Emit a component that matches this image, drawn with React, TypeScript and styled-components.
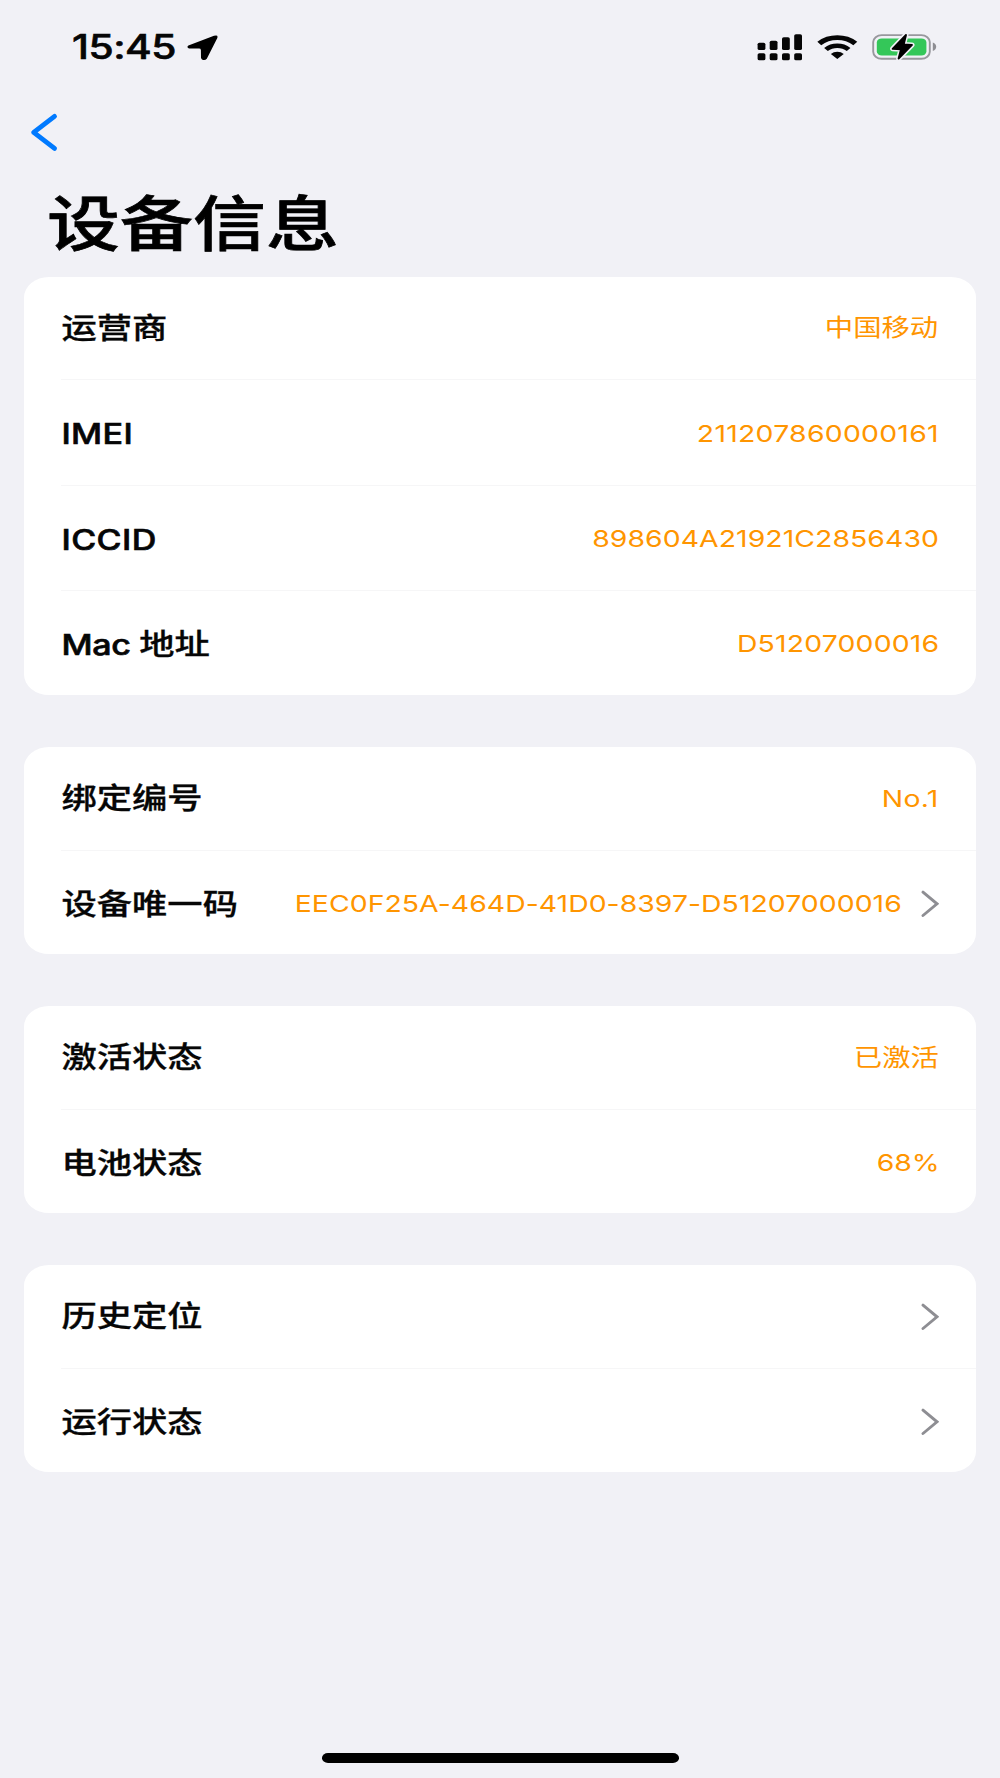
import React from 'react';
import styled, { createGlobalStyle } from 'styled-components';

const STRETCH = 1.217;

const GlobalStyle = createGlobalStyle`
  * {
    box-sizing: border-box;
  }
  body {
    margin: 0;
    background: #f1f1f6;
    font-family: Inter, 'Noto Sans CJK SC', sans-serif;
    color: #060606;
  }
`;

const Screen = styled.main`
  width: 1000px;
  height: 1778px;
  display: flex;
  flex-direction: column;
  overflow: hidden;
  background: #f1f1f6;
`;

const StatusBar = styled.header`
  height: 94px;
  display: flex;
  align-items: center;
  justify-content: space-between;
  padding: 0 63px 0 72px;
`;

const StatusGroup = styled.div<{ $gap: number }>`
  display: flex;
  align-items: center;
  gap: ${(p) => p.$gap}px;
`;

const Clock = styled.time`
  width: 115px;
  font-size: 33.5px;
  font-weight: 500;
  line-height: 40px;
  letter-spacing: -0.4px;
  white-space: nowrap;
  -webkit-text-stroke: 0.6px #060606;
  transform: scaleX(${STRETCH});
  transform-origin: left center;
`;

const NavBar = styled.nav`
  height: 77px;
  display: flex;
  align-items: center;
  padding: 0 0 1px 29px;
`;

const BackButton = styled.button`
  display: flex;
  padding: 0;
  border: 0;
  background: none;
  color: #007aff;
`;

const Title = styled.h1`
  height: 106px;
  margin: 0;
  padding-left: 47px;
  font-size: 60px;
  font-weight: 500;
  line-height: 106px;
  white-space: nowrap;
  color: #000;
  -webkit-text-stroke: 0.7px #000;

  span {
    display: inline-block;
    transform: scaleX(${STRETCH});
    transform-origin: left center;
  }
`;

const Groups = styled.div`
  flex: 1;
  display: flex;
  flex-direction: column;
  gap: 52px;
  padding: 0 24px;
`;

const Card = styled.section`
  display: flex;
  flex-direction: column;
  padding-left: 37px;
  border-radius: 25px / 20.5px;
  background: #fff;
`;

const Row = styled.div<{ $height: number }>`
  height: ${(p) => p.$height}px;
  display: flex;
  align-items: center;
  justify-content: space-between;
  padding-right: 37.4px;

  & + & {
    padding-top: 2px;
    border-top: 1px solid #f6f6f7;
  }
`;

const Label = styled.span<{ $drop: number }>`
  padding: ${(p) => p.$drop}px 0 0 0.4px;
  font-size: 29px;
  font-weight: 500;
  line-height: 40px;
  white-space: nowrap;
  -webkit-text-stroke: 0.3px #060606;
  transform: scaleX(${STRETCH});
  transform-origin: left center;
`;

const Latin = styled.span<{ $spacing: number }>`
  font-size: 28px;
  letter-spacing: ${(p) => p.$spacing}px;
  -webkit-text-stroke: 0.6px #060606;
`;

const Trailing = styled.div`
  display: flex;
  align-items: center;
  gap: 19px;
`;

const Value = styled.span<{ $spacing: number; $inset: number }>`
  margin-right: ${(p) => p.$inset}px;
  font-size: 23.3px;
  font-weight: 400;
  line-height: 32px;
  letter-spacing: ${(p) => p.$spacing}px;
  white-space: nowrap;
  color: #ff9500;
  transform: scaleX(${STRETCH});
  transform-origin: right center;
`;

const Footer = styled.footer`
  height: 25px;
  display: flex;
  justify-content: center;
`;

const HomeIndicator = styled.div`
  width: 357px;
  height: 9.5px;
  border-radius: 6px / 4.75px;
  background: #000;
`;

const LocationIcon = () => (
  <svg width="32" height="27" viewBox="0 0 32 27">
    <path
      d="M1.4 11.6 L27 1.8 Q31.6 0.4 30.2 4.2 L19.8 24.8 Q17.8 26.8 15 25.4 Q14 24.8 14 23.5 L13.9 16 Q13.8 14.6 12 14.6 L2 14.4 Q-0.8 13.2 1.4 11.6 Z"
      fill="#000"
    />
  </svg>
);

const signalBars = [
  { x: 0.6, top: 8.7 },
  { x: 12.7, top: 6.7 },
  { x: 25, top: 3.3 },
  { x: 37.2, top: 0.2 },
];

const SignalIcon = () => (
  <svg width="45" height="27" viewBox="0 0 45 27" fill="#060606">
    {signalBars.map(({ x, top }) => (
      <React.Fragment key={x}>
        <rect x={x} y={top} width="7.8" height={16 - top} rx="1.8" ry="1.5" />
        <rect x={x} y="19.2" width="7.8" height="7" rx="1.8" ry="1.5" />
      </React.Fragment>
    ))}
  </svg>
);

const WifiIcon = () => (
  <svg width="40" height="26" viewBox="0 0 40 26" overflow="visible">
    <g transform="translate(21.3 25.4) scale(1.217 1)" fill="none" stroke="#060606">
      <path d="M-14.8 -16 A21.8 21.8 0 0 1 14.8 -16" strokeWidth="4.7" />
      <path d="M-9.3 -9.9 A13.6 13.6 0 0 1 9.3 -9.9" strokeWidth="4.4" />
      <path d="M0 -0.4 L-5.3 -5.4 A7.6 7.6 0 0 1 5.3 -5.4 Z" fill="#060606" stroke="none" />
    </g>
  </svg>
);

const BatteryIcon = () => (
  <svg width="67" height="29" viewBox="0 0 67 29">
    <g transform="translate(0 -0.8)">
      <rect x="3.2" y="2.9" width="56.6" height="23.6" rx="8.5" ry="7" fill="none" stroke="#98989d" strokeWidth="1.9" />
      <rect x="6.8" y="6.2" width="49.6" height="17" rx="5" ry="4" fill="#34c759" />
      <path d="M62.8 10.2 Q66.2 11.6 66.2 14.6 Q66.2 17.4 62.8 18.8 Z" fill="#8e8e93" />
      <path
        d="M36 2.4 L22.6 16.6 L31 17 L28.6 26.6 L42 12.7 L33.7 12.2 Z"
        fill="#f1f1f6"
        stroke="#f1f1f6"
        strokeWidth="5"
        strokeLinejoin="round"
      />
      <path
        d="M36 2.8 L22.6 16.6 L31 17 L28.6 26.4 L42 12.7 L33.7 12.2 Z"
        fill="#000"
        stroke="#000"
        strokeWidth="1.9"
        strokeLinejoin="round"
      />
    </g>
  </svg>
);

const BackIcon = () => (
  <svg width="30" height="40" viewBox="0 0 30 40">
    <path
      d="M25.5 4.4 L4.7 20.4 L25.5 36.4"
      fill="none"
      stroke="currentColor"
      strokeWidth="4.9"
      strokeLinecap="round"
      strokeLinejoin="round"
    />
  </svg>
);

const ChevronIcon = () => (
  <svg width="18" height="28" viewBox="0 0 18 28">
    <path
      d="M2 2.1 L16 13.8 L2 25.5"
      fill="none"
      stroke="#8e8e93"
      strokeWidth="2.9"
      strokeLinecap="round"
      strokeLinejoin="miter"
    />
  </svg>
);

type Item = {
  latin?: string;
  latinSpacing?: number;
  label?: string;
  value?: string;
  spacing?: number;
  inset?: number;
  link?: boolean;
  height: number;
};

const groups: Item[][] = [
  [
    { label: '运营商', value: '中国移动', height: 102 },
    { latin: 'IMEI', latinSpacing: 0.3, value: '211207860000161', spacing: 0.22, inset: -0.3, height: 106 },
    { latin: 'ICCID', latinSpacing: 0.35, value: '898604A21921C2856430', spacing: 0.06, height: 105 },
    { latin: 'Mac ', latinSpacing: -0.3, label: '地址', value: 'D51207000016', spacing: 0.16, inset: -0.8, height: 105 },
  ],
  [
    { label: '绑定编号', value: 'No.1', spacing: 0.25, inset: -0.4, height: 103 },
    { label: '设备唯一码', value: 'EEC0F25A-464D-41D0-8397-D51207000016', spacing: 0.04, inset: -0.6, link: true, height: 104 },
  ],
  [
    { label: '激活状态', value: '已激活', height: 103 },
    { label: '电池状态', value: '68%', spacing: -0.1, inset: -0.5, height: 104 },
  ],
  [
    { label: '历史定位', link: true, height: 103 },
    { label: '运行状态', link: true, height: 104 },
  ],
];

export default function App() {
  return (
    <>
      <GlobalStyle />
      <Screen>
        <StatusBar>
          <StatusGroup $gap={0}>
            <Clock>15:45</Clock>
            <LocationIcon />
          </StatusGroup>
          <StatusGroup $gap={14}>
            <SignalIcon />
            <WifiIcon />
            <BatteryIcon />
          </StatusGroup>
        </StatusBar>
        <NavBar>
          <BackButton aria-label="返回">
            <BackIcon />
          </BackButton>
        </NavBar>
        <Title>
          <span>设备信息</span>
        </Title>
        <Groups>
          {groups.map((items, g) => (
            <Card key={g}>
              {items.map((item, i) => (
                <Row key={(item.latin ?? '') + (item.label ?? '')} $height={item.height}>
                  <Label $drop={item.latin || i === 0 ? 1 : 2}>
                    {item.latin && <Latin $spacing={item.latinSpacing ?? 0}>{item.latin}</Latin>}
                    {item.label}
                  </Label>
                  <Trailing>
                    {item.value && (
                      <Value $spacing={item.spacing ?? 0} $inset={item.inset ?? 0}>
                        {item.value}
                      </Value>
                    )}
                    {item.link && <ChevronIcon />}
                  </Trailing>
                </Row>
              ))}
            </Card>
          ))}
        </Groups>
        <Footer>
          <HomeIndicator />
        </Footer>
      </Screen>
    </>
  );
}
